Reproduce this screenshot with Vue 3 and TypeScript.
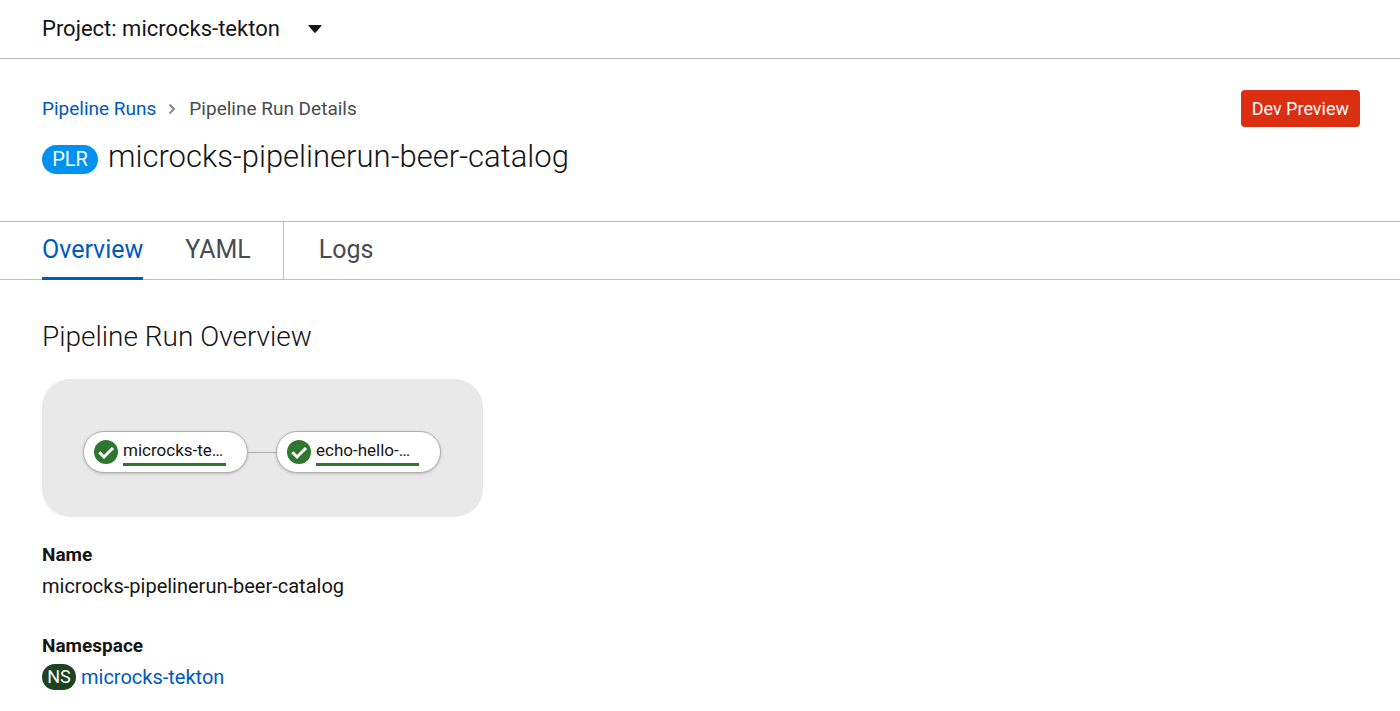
<script setup lang="ts">
interface Tab {
  label: string
  active: boolean
  divided: boolean
}

const project = 'microcks-tekton'
const runName = 'microcks-pipelinerun-beer-catalog'
const tabs: Tab[] = [
  { label: 'Overview', active: true, divided: false },
  { label: 'YAML', active: false, divided: false },
  { label: 'Logs', active: false, divided: true },
]
const tasks: string[] = ['microcks-te…', 'echo-hello-…']
</script>

<template>
  <div class="page">
    <header class="project-bar">
      <button class="project-toggle" type="button" aria-haspopup="listbox">
        <span>Project: {{ project }}</span>
        <svg class="caret" viewBox="0 0 14 8" aria-hidden="true">
          <path d="M1.2 0h11.6q1.2 0 .5.9L8 7.2q-1 1-2 0L.7.9Q0 0 1.2 0z" />
        </svg>
      </button>
    </header>

    <section class="heading">
      <div class="heading-top">
        <nav class="breadcrumb" aria-label="Breadcrumb">
          <a href="#">Pipeline Runs</a>
          <svg class="chevron" viewBox="0 0 8 12" aria-hidden="true">
            <path d="M1.5 1.5 6 6l-4.500 4.500" />
          </svg>
          <span>Pipeline Run Details</span>
        </nav>
        <span class="preview">Dev Preview</span>
      </div>
      <h1 class="title">
        <span class="badge badge-run">PLR</span>
        <span>{{ runName }}</span>
      </h1>
    </section>

    <nav class="tabs" aria-label="Pipeline run views">
      <div v-for="tab in tabs" :key="tab.label" class="tab" :class="{ active: tab.active, divided: tab.divided }">
        <button type="button">{{ tab.label }}</button>
      </div>
    </nav>

    <main class="content">
      <h2 class="section-title">Pipeline Run Overview</h2>
      <div class="graph">
        <template v-for="(task, index) in tasks" :key="task">
          <span v-if="index > 0" class="link"></span>
          <div class="node">
            <svg class="check" viewBox="0 0 24 24" aria-hidden="true">
              <circle cx="12" cy="12" r="12" />
              <path d="M5.300 12.300 10 17 19 8" />
            </svg>
            <span class="node-label">{{ task }}</span>
          </div>
        </template>
      </div>

      <dl class="details">
        <dt>Name</dt>
        <dd>{{ runName }}</dd>
        <dt>Namespace</dt>
        <dd>
          <span class="badge badge-ns">NS</span>
          <a href="#">{{ project }}</a>
        </dd>
      </dl>
    </main>
  </div>
</template>

<style>
body {
  margin: 0;
  background: #fff;
}
</style>

<style scoped>
.page {
  color: #151515;
  font-family: Roboto, "Liberation Sans", sans-serif;
  font-size: 19px;
  line-height: 28px;
}

a {
  color: #0059c0;
  text-decoration: none;
}

button {
  padding: 0;
  border: 0;
  background: none;
  color: inherit;
  font: inherit;
  cursor: pointer;
}

.project-bar {
  display: flex;
  padding: 15px 42px;
  border-bottom: 1px solid #bdbdbd;
}

.project-toggle {
  display: flex;
  align-items: center;
  gap: 28px;
  font-size: 22px;
}

.caret {
  width: 14px;
  height: 8px;
  fill: #151515;
}

.heading {
  padding: 31px 40px 44px 42px;
}

.heading-top {
  display: flex;
  align-items: center;
  justify-content: space-between;
}

.breadcrumb {
  display: flex;
  align-items: center;
  color: #484c50;
}

.chevron {
  width: 8px;
  height: 12px;
  margin: 0 13px 0 12px;
  fill: none;
  stroke: #85888b;
  stroke-width: 2;
}

.preview {
  padding: 5px 11px 4px;
  border-radius: 4px;
  background: #db2f12;
  color: #fff;
  font-size: 18px;
}

.title {
  display: flex;
  align-items: center;
  gap: 10px;
  margin: 10px 0 0;
  font-size: 31px;
  font-weight: 300;
  line-height: 40px;
}

.badge {
  display: inline-block;
  box-sizing: border-box;
  border-radius: 20px;
  color: #fff;
  text-align: center;
  font-weight: 400;
}

.badge-run {
  width: 56px;
  margin-top: 4px;
  background: #0092ef;
  font-size: 20px;
  line-height: 29px;
}

.badge-ns {
  width: 34px;
  background: #1c4220;
  font-size: 18px;
  line-height: 26px;
}

.tabs {
  display: flex;
  padding: 0 42px;
  border-top: 1px solid #bdbdbd;
  border-bottom: 1px solid #bdbdbd;
  color: #484c50;
  font-size: 25px;
}

.tab {
  display: flex;
  margin-right: 42px;
}

.tab button {
  margin-bottom: -1px;
  padding: 14px 0 13px;
  border-bottom: 3px solid transparent;
}

.tab.active button {
  border-bottom-color: #0059c0;
  color: #0059c0;
}

.tab.divided {
  margin-left: -10px;
  padding-left: 35px;
  border-left: 1px solid #bdbdbd;
}

.content {
  padding: 39px 42px 20px;
}

.section-title {
  margin: 0 0 25px;
  font-size: 28px;
  font-weight: 300;
  line-height: 35px;
}

.graph {
  display: flex;
  align-items: center;
  width: fit-content;
  padding: 52px 42px 44px 41px;
  border-radius: 28px;
  background: #e9e9e9;
}

.node {
  display: flex;
  align-items: center;
  box-sizing: border-box;
  width: 165px;
  height: 42px;
  padding-left: 10px;
  gap: 5px;
  border: 1px solid #b0b0b0;
  border-radius: 21px;
  background: #fff;
  box-shadow: 0 1px 3px rgba(0, 0, 0, 0.2);
}

.link {
  width: 28px;
  height: 1px;
  background: #aeaeae;
}

.check {
  width: 24px;
  height: 24px;
  fill: #2f7630;
}

.check path {
  fill: none;
  stroke: #fff;
  stroke-width: 3;
}

.node-label {
  width: 103px;
  border-bottom: 3px solid #2f7630;
  font-size: 17px;
  line-height: 25px;
  white-space: nowrap;
}

.details {
  margin: 24px 0 0;
}

.details dt {
  font-weight: 700;
}

.details dd {
  display: flex;
  align-items: center;
  gap: 5px;
  margin: 3px 0 32px;
  font-size: 20px;
}
</style>
